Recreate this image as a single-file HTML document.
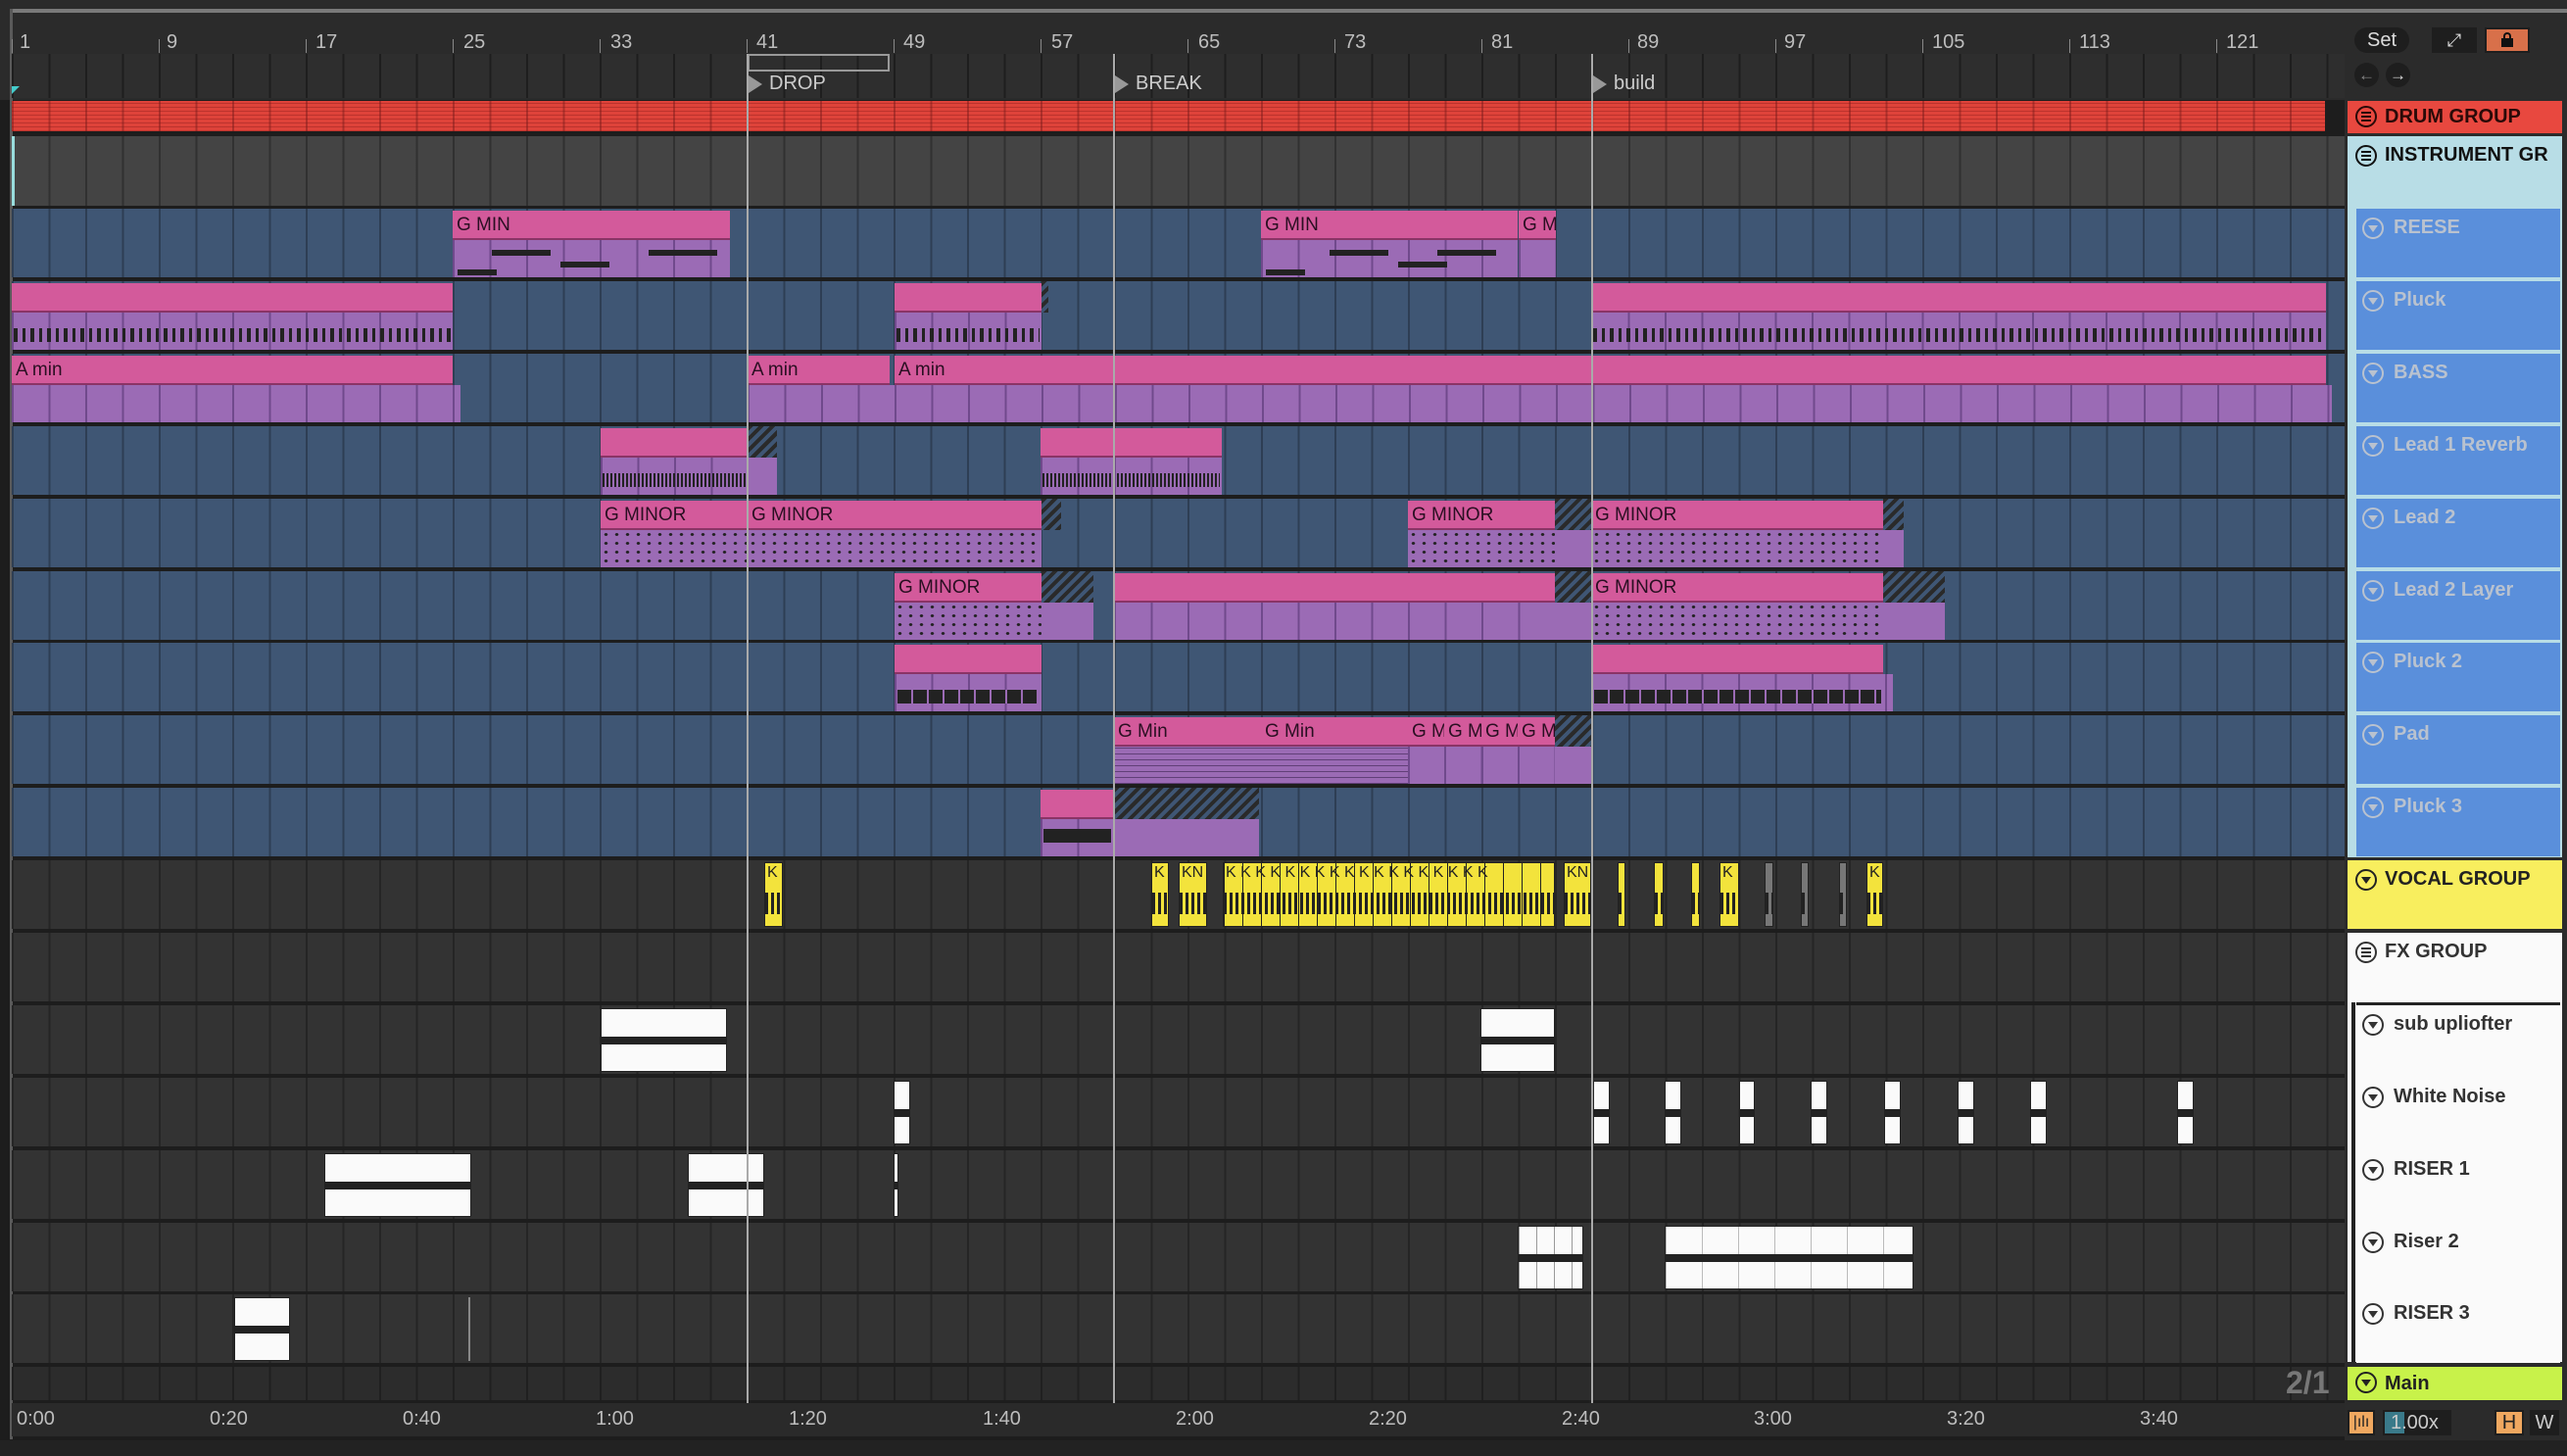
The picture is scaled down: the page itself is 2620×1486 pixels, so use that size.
<!DOCTYPE html>
<html><head><meta charset="utf-8"><style>
*{margin:0;padding:0;box-sizing:border-box}
body{width:2620px;height:1486px;background:#1d1d1d;position:relative;overflow:hidden;font-family:"Liberation Sans",sans-serif}
.a{position:absolute}
.row{position:absolute;left:12px;width:2381px;height:70px;background-image:repeating-linear-gradient(90deg,rgba(0,0,0,.28) 0 2px,transparent 2px 37.5px)}
.ir{background-color:#3f5674}
.dr{background-color:#333}
.clip{position:absolute;height:70px}
.clip .h{position:absolute;left:0;right:0;top:2px;height:30px;background:#d35a9b;color:#2a0f22;font-size:19px;line-height:30px;padding-left:4px;white-space:nowrap;overflow:hidden;border-bottom:2px solid #8a3466}
.clip .b{position:absolute;left:0;right:0;top:32px;bottom:0;background:#9b6bb5;background-image:repeating-linear-gradient(90deg,rgba(70,40,100,.5) 0 2px,transparent 2px 37.5px)}
.hatch{position:absolute;height:70px;background:repeating-linear-gradient(135deg,#2a2a2a 0 4px,#3f5674 4px 8px)}
.hb{position:absolute;top:32px;bottom:0;left:0;right:0;background:#9b6bb5}
.notes{position:absolute;left:2px;right:2px;top:16px;height:14px;background:repeating-linear-gradient(90deg,#222 0 4px,transparent 4px 9px,#222 9px 12px,transparent 12px 17px)}
.bar{position:absolute;background:#222;height:6px}
.y{position:absolute;top:880px;height:66px;background:#f3e33c;border:1px solid #222;font-size:16px;color:#222;padding-left:2px;line-height:20px;overflow:hidden}
.y:after{content:"";position:absolute;left:0;right:0;top:30px;height:22px;background:repeating-linear-gradient(90deg,#222 0 3px,transparent 3px 6px)}
.w{position:absolute;background:#fafafa;border:1px solid #222;overflow:hidden}
.w:after{content:"";position:absolute;left:0;right:0;top:45%;height:8px;background:#222}
.lbl{position:absolute;left:2396px;width:219px;height:70px;font-weight:bold;font-size:20px;line-height:38px;padding-left:38px;white-space:nowrap}
.ic{position:absolute;left:8px;top:9px;width:22px;height:22px;border:2px solid currentColor;border-radius:50%}
.ic:after{content:"";position:absolute;left:4px;top:6px;border-left:5px solid transparent;border-right:5px solid transparent;border-top:7px solid currentColor}
.ic.l:after{left:4px;top:4px;width:10px;height:2px;border:0;background:currentColor;box-shadow:0 4px 0 currentColor,0 8px 0 currentColor}
.ch{left:2405px;width:208px;padding-left:38px}
.ch .ic{left:6px}
.rn{position:absolute;top:32px;color:#bdbdbd;font-size:20px}
.rt{position:absolute;top:40px;width:1px;height:14px;background:#888}
.tm{position:absolute;top:1437px;color:#bdbdbd;font-size:20px}
.vl{position:absolute;top:55px;width:2px;height:1377px;background:#aaa}
</style></head><body>
<div class="a" style="left:0;top:0;width:2620px;height:102px;background:#2b2b2b"></div>
<div class="a" style="left:10px;top:9px;width:2610px;height:4px;background:#7a7a7a;border-radius:8px 0 0 0"></div>
<div class="a" style="left:10px;top:9px;width:3px;height:1460px;background:#5a5a5a"></div>
<div class="a" style="left:12px;top:55px;width:2381px;height:45px;background:#2e2e2e;background-image:repeating-linear-gradient(90deg,rgba(0,0,0,.35) 0 2px,transparent 2px 37.5px)"></div>
<div class="rt" style="left:12px"></div><div class="rn" style="left:20px">1</div>
<div class="rt" style="left:162px"></div><div class="rn" style="left:170px">9</div>
<div class="rt" style="left:312px"></div><div class="rn" style="left:322px">17</div>
<div class="rt" style="left:462px"></div><div class="rn" style="left:473px">25</div>
<div class="rt" style="left:612px"></div><div class="rn" style="left:623px">33</div>
<div class="rt" style="left:762px"></div><div class="rn" style="left:772px">41</div>
<div class="rt" style="left:912px"></div><div class="rn" style="left:922px">49</div>
<div class="rt" style="left:1062px"></div><div class="rn" style="left:1073px">57</div>
<div class="rt" style="left:1212px"></div><div class="rn" style="left:1223px">65</div>
<div class="rt" style="left:1362px"></div><div class="rn" style="left:1372px">73</div>
<div class="rt" style="left:1512px"></div><div class="rn" style="left:1522px">81</div>
<div class="rt" style="left:1662px"></div><div class="rn" style="left:1671px">89</div>
<div class="rt" style="left:1812px"></div><div class="rn" style="left:1821px">97</div>
<div class="rt" style="left:1962px"></div><div class="rn" style="left:1972px">105</div>
<div class="rt" style="left:2112px"></div><div class="rn" style="left:2122px">113</div>
<div class="rt" style="left:2262px"></div><div class="rn" style="left:2272px">121</div>
<div class="a" style="left:763px;top:55px;width:145px;height:18px;border:2px solid #999"></div>
<div class="a" style="left:12px;top:88px;width:0;height:0;border-left:8px solid #4cc;border-bottom:8px solid transparent"></div>
<div class="a" style="left:764px;top:77px;border-left:14px solid #999;border-top:9px solid transparent;border-bottom:9px solid transparent"></div>
<div class="a" style="left:785px;top:74px;color:#ccc;font-size:20px">DROP</div>
<div class="a" style="left:1138px;top:77px;border-left:14px solid #999;border-top:9px solid transparent;border-bottom:9px solid transparent"></div>
<div class="a" style="left:1159px;top:74px;color:#ccc;font-size:20px">BREAK</div>
<div class="a" style="left:1626px;top:77px;border-left:14px solid #999;border-top:9px solid transparent;border-bottom:9px solid transparent"></div>
<div class="a" style="left:1647px;top:74px;color:#ccc;font-size:20px">build</div>
<div class="a" style="left:12px;top:103px;width:2361px;height:31px;background:#df433a;background-image:repeating-linear-gradient(0deg,rgba(120,20,20,.35) 0 1px,transparent 1px 4px),repeating-linear-gradient(90deg,rgba(100,20,20,.4) 0 2px,transparent 2px 37.5px)"></div>
<div class="row" style="top:139px;height:71px;background-color:#444"></div>
<div class="a" style="left:12px;top:139px;width:3px;height:71px;background:#9dd"></div>
<div class="row ir" style="top:213px"></div>
<div class="row ir" style="top:287px"></div>
<div class="row ir" style="top:361px"></div>
<div class="row ir" style="top:435px"></div>
<div class="row ir" style="top:509px"></div>
<div class="row ir" style="top:583px"></div>
<div class="row ir" style="top:656px"></div>
<div class="row ir" style="top:730px"></div>
<div class="row ir" style="top:804px"></div>
<div class="row dr" style="top:878px"></div>
<div class="row dr" style="top:952px"></div>
<div class="row dr" style="top:1026px"></div>
<div class="row dr" style="top:1100px"></div>
<div class="row dr" style="top:1174px"></div>
<div class="row dr" style="top:1248px"></div>
<div class="row dr" style="top:1321px"></div>
<div class="row dr" style="top:1395px;height:34px;background-color:#2c2c2c"></div>

<div class="clip" style="left:462px;top:213px;width:283px"><div class="h">G MIN</div><div class="b"><div class="bar" style="left:40px;top:10px;width:60px"></div><div class="bar" style="left:110px;top:22px;width:50px"></div><div class="bar" style="left:5px;top:30px;width:40px"></div><div class="bar" style="left:200px;top:10px;width:70px"></div></div></div>
<div class="clip" style="left:1287px;top:213px;width:262px"><div class="h">G MIN</div><div class="b"><div class="bar" style="left:70px;top:10px;width:60px"></div><div class="bar" style="left:140px;top:22px;width:50px"></div><div class="bar" style="left:5px;top:30px;width:40px"></div><div class="bar" style="left:180px;top:10px;width:60px"></div></div></div>
<div class="clip" style="left:1550px;top:213px;width:38px"><div class="h">G M</div><div class="b"></div></div>
<div class="clip" style="left:12px;top:287px;width:450px"><div class="h"></div><div class="b"><div class="notes"></div></div></div>
<div class="clip" style="left:913px;top:287px;width:150px"><div class="h"></div><div class="b"><div class="notes"></div></div></div>
<div class="hatch" style="left:1063px;top:287px;width:7px;height:32px"></div>
<div class="clip" style="left:1624px;top:287px;width:750px"><div class="h"></div><div class="b"><div class="notes"></div></div></div>
<div class="clip" style="left:12px;top:361px;width:458px"><div class="h" style="right:8px">A min</div><div class="b"></div></div>
<div class="clip" style="left:763px;top:361px;width:150px"><div class="h" style="right:5px">A min</div><div class="b"></div></div>
<div class="clip" style="left:913px;top:361px;width:1467px"><div class="h" style="right:6px">A min</div><div class="b"></div></div>
<div class="clip" style="left:613px;top:435px;width:150px"><div class="h"></div><div class="b"><div class="notes" style="background:repeating-linear-gradient(90deg,#222 0 2px,transparent 2px 4px)"></div></div></div>
<div class="hatch" style="left:763px;top:435px;width:30px"><div class="hb"></div></div>
<div class="clip" style="left:1062px;top:435px;width:185px"><div class="h"></div><div class="b"><div class="notes" style="background:repeating-linear-gradient(90deg,#222 0 2px,transparent 2px 4px)"></div></div></div>
<div class="clip" style="left:613px;top:509px;width:150px"><div class="h">G MINOR</div><div class="b" style="background-image:radial-gradient(#222 1.5px,transparent 2px);background-size:11px 9px"></div></div>
<div class="clip" style="left:763px;top:509px;width:300px"><div class="h">G MINOR</div><div class="b" style="background-image:radial-gradient(#222 1.5px,transparent 2px);background-size:11px 9px"></div></div>
<div class="hatch" style="left:1063px;top:509px;width:20px;height:32px"></div>
<div class="clip" style="left:1437px;top:509px;width:150px"><div class="h">G MINOR</div><div class="b" style="background-image:radial-gradient(#222 1.5px,transparent 2px);background-size:11px 9px"></div></div>
<div class="hatch" style="left:1587px;top:509px;width:37px"><div class="hb"></div></div>
<div class="clip" style="left:1624px;top:509px;width:298px"><div class="h">G MINOR</div><div class="b" style="background-image:radial-gradient(#222 1.5px,transparent 2px);background-size:11px 9px"></div></div>
<div class="hatch" style="left:1922px;top:509px;width:21px"><div class="hb"></div></div>
<div class="clip" style="left:913px;top:583px;width:150px"><div class="h">G MINOR</div><div class="b" style="background-image:radial-gradient(#222 1.5px,transparent 2px);background-size:11px 9px"></div></div>
<div class="hatch" style="left:1063px;top:583px;width:53px"><div class="hb"></div></div>
<div class="clip" style="left:1137px;top:583px;width:450px"><div class="h"></div><div class="b"></div></div>
<div class="hatch" style="left:1587px;top:583px;width:37px"><div class="hb"></div></div>
<div class="clip" style="left:1624px;top:583px;width:298px"><div class="h">G MINOR</div><div class="b" style="background-image:radial-gradient(#222 1.5px,transparent 2px);background-size:11px 9px"></div></div>
<div class="hatch" style="left:1922px;top:583px;width:63px"><div class="hb"></div></div>
<div class="clip" style="left:913px;top:656px;width:150px"><div class="h"></div><div class="b"><div class="bar" style="left:3px;top:16px;right:3px;height:14px;width:auto;background:repeating-linear-gradient(90deg,#222 0 14px,#9b6bb5 14px 16px)"></div></div></div>
<div class="clip" style="left:1624px;top:656px;width:308px"><div class="h" style="right:10px"></div><div class="b"><div class="bar" style="left:3px;top:16px;right:12px;height:14px;width:auto;background:repeating-linear-gradient(90deg,#222 0 14px,#9b6bb5 14px 16px)"></div></div></div>
<div class="clip" style="left:1137px;top:730px;width:150px"><div class="h">G Min</div><div class="b" style="background-image:repeating-linear-gradient(0deg,rgba(40,20,60,.5) 0 1px,transparent 1px 6px)"></div></div>
<div class="clip" style="left:1287px;top:730px;width:150px"><div class="h">G Min</div><div class="b" style="background-image:repeating-linear-gradient(0deg,rgba(40,20,60,.5) 0 1px,transparent 1px 6px)"></div></div>
<div class="clip" style="left:1437px;top:730px;width:37px"><div class="h">G M</div><div class="b"></div></div>
<div class="clip" style="left:1474px;top:730px;width:38px"><div class="h">G M</div><div class="b"></div></div>
<div class="clip" style="left:1512px;top:730px;width:37px"><div class="h">G M</div><div class="b"></div></div>
<div class="clip" style="left:1549px;top:730px;width:38px"><div class="h">G M</div><div class="b"></div></div>
<div class="hatch" style="left:1587px;top:730px;width:37px"><div class="hb"></div></div>
<div class="clip" style="left:1062px;top:804px;width:75px"><div class="h"></div><div class="b"><div class="bar" style="left:3px;top:10px;right:3px;width:auto;height:14px"></div></div></div>
<div class="hatch" style="left:1137px;top:804px;width:148px"><div class="hb"></div></div>

<div class="y" style="left:780px;width:19px">K</div>
<div class="y" style="left:1175px;width:18px">K</div>
<div class="y" style="left:1203px;width:29px">KN</div>
<div class="y" style="left:1248px;width:339px;background-image:repeating-linear-gradient(90deg,#222 0 1px,transparent 1px 19px)">K&nbsp;K&nbsp;K&nbsp;K&nbsp;K&nbsp;K&nbsp;K&nbsp;K&nbsp;K&nbsp;K&nbsp;K&nbsp;K&nbsp;K&nbsp;K&nbsp;K&nbsp;K&nbsp;K&nbsp;K</div>
<div class="y" style="left:1596px;width:28px">KN</div>
<div class="y" style="left:1651px;width:8px"></div>
<div class="y" style="left:1688px;width:10px"></div>
<div class="y" style="left:1726px;width:9px"></div>
<div class="y" style="left:1755px;width:20px">K</div>
<div class="y" style="left:1801px;width:9px;background:#777"></div>
<div class="y" style="left:1838px;width:8px;background:#777"></div>
<div class="y" style="left:1877px;width:8px;background:#777"></div>
<div class="y" style="left:1905px;width:17px;background:#f3e33c">K</div>
<div class="w" style="left:613px;top:1029px;width:129px;height:65px"></div>
<div class="w" style="left:1511px;top:1029px;width:76px;height:65px"></div>
<div class="w" style="left:912px;top:1103px;width:17px;height:65px"></div>
<div class="w" style="left:1626px;top:1103px;width:17px;height:65px"></div>
<div class="w" style="left:1699px;top:1103px;width:17px;height:65px"></div>
<div class="w" style="left:1775px;top:1103px;width:16px;height:65px"></div>
<div class="w" style="left:1848px;top:1103px;width:17px;height:65px"></div>
<div class="w" style="left:1923px;top:1103px;width:17px;height:65px"></div>
<div class="w" style="left:1998px;top:1103px;width:17px;height:65px"></div>
<div class="w" style="left:2072px;top:1103px;width:17px;height:65px"></div>
<div class="w" style="left:2222px;top:1103px;width:17px;height:65px"></div>
<div class="w" style="left:331px;top:1177px;width:150px;height:65px"></div>
<div class="w" style="left:702px;top:1177px;width:78px;height:65px"></div>
<div class="w" style="left:912px;top:1177px;width:5px;height:65px"></div>
<div class="w" style="left:1549px;top:1251px;width:67px;height:65px;background-image:repeating-linear-gradient(90deg,#999 0 1px,transparent 1px 18px)"></div>
<div class="w" style="left:1699px;top:1251px;width:254px;height:65px;background-image:repeating-linear-gradient(90deg,#bbb 0 1px,transparent 1px 37px)"></div>
<div class="w" style="left:239px;top:1324px;width:57px;height:65px"></div>
<div class="a" style="left:478px;top:1324px;width:2px;height:65px;background:#888"></div>

<div class="vl" style="left:762px"></div>
<div class="vl" style="left:1136px"></div>
<div class="vl" style="left:1624px"></div>

<div class="a" style="left:2393px;top:0;width:227px;height:1486px;background:#2b2b2b"></div>
<div class="a" style="left:2393px;top:9px;width:227px;height:4px;background:#7a7a7a"></div>
<div class="a" style="left:2403px;top:28px;width:56px;height:26px;background:#1e1e1e;border-radius:13px;color:#ddd;font-size:20px;text-align:center;line-height:26px">Set</div>
<div class="a" style="left:2482px;top:28px;width:46px;height:26px;background:#1e1e1e;color:#ddd;font-size:18px;text-align:center;line-height:26px">⤢</div>
<div class="a" style="left:2536px;top:28px;width:46px;height:26px;background:#d8704a;border:2px solid #1e1e1e"><span style="position:absolute;left:15px;top:9px;width:12px;height:9px;background:#111"></span><span style="position:absolute;left:17px;top:3px;width:8px;height:8px;border:2px solid #111;border-bottom:0;border-radius:4px 4px 0 0"></span></div>
<div class="a" style="left:2403px;top:64px;width:25px;height:25px;background:#1e1e1e;border-radius:50%;color:#888;font-size:17px;text-align:center;line-height:25px">←</div>
<div class="a" style="left:2435px;top:64px;width:25px;height:25px;background:#1e1e1e;border-radius:50%;color:#ddd;font-size:17px;text-align:center;line-height:25px">→</div>

<div class="lbl" style="top:103px;height:33px;background:#e8483f;color:#2a0a08;line-height:33px"><span class="ic l" style="top:5px"></span>DRUM GROUP</div>
<div class="lbl" style="top:139px;height:736px;background:#b8dde6;color:#111"><span class="ic l"></span>INSTRUMENT GR</div>
<div class="lbl ch" style="top:213px;background:#5a8fdb;color:#b9c2cf"><span class="ic"></span>REESE</div>
<div class="lbl ch" style="top:287px;background:#5a8fdb;color:#b9c2cf"><span class="ic"></span>Pluck</div>
<div class="lbl ch" style="top:361px;background:#5a8fdb;color:#b9c2cf"><span class="ic"></span>BASS</div>
<div class="lbl ch" style="top:435px;background:#5a8fdb;color:#b9c2cf"><span class="ic"></span>Lead 1 Reverb</div>
<div class="lbl ch" style="top:509px;background:#5a8fdb;color:#b9c2cf"><span class="ic"></span>Lead 2</div>
<div class="lbl ch" style="top:583px;background:#5a8fdb;color:#b9c2cf"><span class="ic"></span>Lead 2 Layer</div>
<div class="lbl ch" style="top:656px;background:#5a8fdb;color:#b9c2cf"><span class="ic"></span>Pluck 2</div>
<div class="lbl ch" style="top:730px;background:#5a8fdb;color:#b9c2cf"><span class="ic"></span>Pad</div>
<div class="lbl ch" style="top:804px;background:#5a8fdb;color:#b9c2cf"><span class="ic"></span>Pluck 3</div>
<div class="lbl" style="top:878px;background:#f8ee5e;color:#222"><span class="ic"></span>VOCAL GROUP</div>
<div class="lbl" style="top:952px;height:438px;background:#fafafa;color:#333"><span class="ic l"></span>FX GROUP</div>
<div class="a" style="left:2400px;top:1023px;width:4px;height:367px;background:#222"></div>
<div class="lbl ch" style="top:1026px;background:#fafafa;color:#333"><span class="ic"></span>sub upliofter</div>
<div class="lbl ch" style="top:1100px;background:#fafafa;color:#333"><span class="ic"></span>White Noise</div>
<div class="lbl ch" style="top:1174px;background:#fafafa;color:#333"><span class="ic"></span>RISER 1</div>
<div class="lbl ch" style="top:1248px;background:#fafafa;color:#333"><span class="ic"></span>Riser 2</div>
<div class="lbl ch" style="top:1321px;background:#fafafa;color:#333"><span class="ic"></span>RISER 3</div>
<div class="a" style="left:2405px;top:1023px;width:208px;height:3px;background:#222"></div>
<div class="lbl" style="top:1395px;height:34px;background:#c8f24a;color:#222;line-height:34px"><span class="ic" style="top:5px"></span>Main</div>
<div class="a" style="left:2333px;top:1393px;color:#777;font-size:32px;font-weight:bold">2/1</div>

<div class="a" style="left:12px;top:1432px;width:2381px;height:34px;background:#2a2a2a"></div>
<div class="tm" style="left:17px">0:00</div><div class="tm" style="left:214px">0:20</div><div class="tm" style="left:411px">0:40</div><div class="tm" style="left:608px">1:00</div><div class="tm" style="left:805px">1:20</div><div class="tm" style="left:1003px">1:40</div><div class="tm" style="left:1200px">2:00</div><div class="tm" style="left:1397px">2:20</div><div class="tm" style="left:1594px">2:40</div><div class="tm" style="left:1790px">3:00</div><div class="tm" style="left:1987px">3:20</div><div class="tm" style="left:2184px">3:40</div>
<div class="a" style="left:0;top:1470px;width:2620px;height:16px;background:#222"></div>
<div class="a" style="left:2396px;top:1439px;width:28px;height:26px;background:#f0a860;border:2px solid #1e1e1e;color:#222;font-size:16px;text-align:center;line-height:22px">|ılı</div>
<div class="a" style="left:2432px;top:1439px;width:70px;height:26px;background:#1e1e1e;color:#ccc;font-size:20px;line-height:26px;padding-left:8px"><span style="position:absolute;left:2px;top:2px;width:20px;height:22px;background:#3a7a8a"></span><span style="position:relative">1.00x</span></div>
<div class="a" style="left:2546px;top:1439px;width:30px;height:26px;background:#f0a860;border:2px solid #1e1e1e;color:#222;font-size:20px;text-align:center;line-height:22px">H</div>
<div class="a" style="left:2582px;top:1439px;width:30px;height:26px;background:#1e1e1e;color:#ccc;font-size:20px;text-align:center;line-height:26px">W</div>
</body></html>
